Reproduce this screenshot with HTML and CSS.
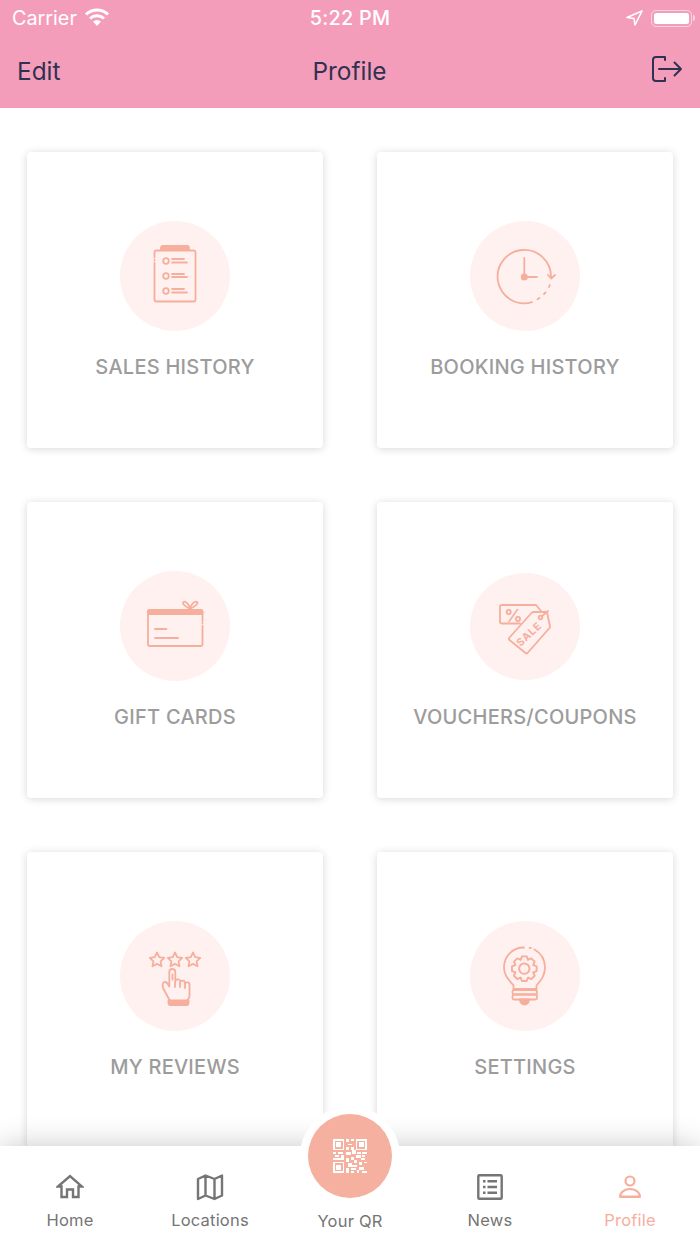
FILE: index.html
```html
<!DOCTYPE html>
<html lang="en">
<head>
<meta charset="utf-8">
<title>Profile</title>
<link rel="stylesheet" href="styles.css">
</head>
<body>
<div class="screen">
  <header class="topbar">
    <div class="status">
      <div class="status-left">
        <span>Carrier</span>
        <svg class="wifi" width="26" height="19" viewBox="0 0 26 19"><path d="M2 7.500a16 16 0 0 1 22 0M6 11.500a10.500 10.500 0 0 1 14 0" fill="none" stroke="#fff" stroke-width="3"/><path d="M9 14.500a6 6 0 0 1 8 0L13 19z" fill="#fff"/></svg>
      </div>
      <span class="time">5:22 PM</span>
      <div class="status-right">
        <svg width="17" height="16" viewBox="0 0 17 16"><path d="M16 1 1 7.500l7 1 1 6.500z" fill="none" stroke="#fff" stroke-width="1.600" stroke-linejoin="round"/></svg>
        <div class="battery"><div class="battery-fill"></div></div>
        <div class="battery-nub"></div>
      </div>
    </div>
    <div class="nav">
      <span class="nav-edit">Edit</span>
      <span class="nav-title">Profile</span>
      <svg class="nav-logout" width="32" height="28" viewBox="0 0 32 28"><path d="M14 5V2H5a3 3 0 0 0-3 3v18a3 3 0 0 0 3 3h9v-3M8 14h22M23.500 7.500 30 14l-6.500 6.500" fill="none" stroke="#2e3250" stroke-width="2" stroke-linecap="round" stroke-linejoin="round"/></svg>
    </div>
  </header>

  <main class="content">
    <div class="grid">
      <section class="card">
        <div class="circle">
          <svg width="110" height="110" viewBox="10 11 110 110"><g class="ink">
            <path d="M44.500 53v36.500a2 2 0 0 0 2 2h37a2 2 0 0 0 2-2v-47a2 2 0 0 0-2-2h-37a2 2 0 0 0-2 2v5M44.500 50v.5"/>
            <path class="solid" d="M51 40v-2a2 2 0 0 1 2-2h24a2 2 0 0 1 2 2v2z"/>
            <circle cx="56" cy="51" r="2.800"/><circle cx="56" cy="66" r="2.800"/><circle cx="56" cy="81" r="2.800"/>
            <path d="M62 49h12M62 52.500h15M62 64h12M62 67h15M62 79h12M62 82.500h15"/>
          </g></svg>
        </div>
        <h2 class="label">SALES HISTORY</h2>
      </section>
      <section class="card">
        <div class="circle">
          <svg width="110" height="110" viewBox="10 11 110 110"><g class="ink">
            <path d="M72 92.200A26.700 26.700 0 1 1 91 67.500"/>
            <path d="M88 65l3.200 3.500 3.800-3.500"/>
            <path d="M64.300 48v19H77"/>
            <circle class="solid" cx="64.300" cy="67" r="2.600"/>
            <path d="M89.800 75l-.8 2M85.500 82.500l-1.500 1.500M79.500 88l-2 1.200"/>
          </g></svg>
        </div>
        <h2 class="label">BOOKING HISTORY</h2>
      </section>
      <section class="card">
        <div class="circle">
          <svg width="110" height="110" viewBox="10 11 110 110"><g class="ink">
            <path d="M92.500 66v18a2 2 0 0 1-2 2H40a2 2 0 0 1-2-2V52a2 2 0 0 1 2-2h50.500a2 2 0 0 1 2 2v9M92.500 63v.5"/>
            <path class="solid" d="M38 54v-2a2 2 0 0 1 2-2h50.500a2 2 0 0 1 2 2v2z"/>
            <path d="M45 69h11.500M45 78h23"/>
            <path d="M80 49c-6-3-8-6-6.500-7 1.500-1.200 6 2 6.500 7zM80 49c.8-5 5-8.200 7-7 1.500 1-.8 4-7 7z"/>
          </g></svg>
        </div>
        <h2 class="label">GIFT CARDS</h2>
      </section>
      <section class="card">
        <div class="circle circle-short">
          <svg width="110" height="110" viewBox="10 11 110 110"><g class="ink">
            <path d="M60 63.500H42a2 2 0 0 1-2-2V47a2 2 0 0 1 2-2h34l5.500 6.500"/>
            <path d="M49.500 77.500 71.500 53a3 3 0 0 1 2-1H87l3 14.500a2 2 0 0 1-.5 1.500L67.500 93a1.500 1.500 0 0 1-2 0L49.500 80a1.500 1.500 0 0 1 0-2.500z"/>
            <circle cx="80.500" cy="57.500" r="1.800"/>
            <path d="M81.500 56.500 88 51"/>
            <text class="tag-pct" x="53.500" y="62">%</text>
            <text class="tag-sale" transform="translate(60.500 87) rotate(-43)">SALE</text>
          </g></svg>
        </div>
        <h2 class="label">VOUCHERS/COUPONS</h2>
      </section>
      <section class="card">
        <div class="circle">
          <svg width="110" height="110" viewBox="10 11 110 110"><g class="ink">
            <path id="star" d="M47 42.500l2.200 4.600 5 .7-3.600 3.500.9 5-4.500-2.400-4.500 2.400.9-5-3.600-3.500 5-.7z"/>
            <use href="#star" x="18"/><use href="#star" x="36"/>
            <path d="M59.500 90 53.500 79c-2-4-.5-7 1.500-7 2.500 0 3.500 3 4.300 4.500V62c0-4 6-4 6 0v9.500c0-2.500 5-3 5 0v1c0-2.500 4.500-2.500 4.700.3v1c.3-2 4.500-2.200 4.500.5V86c0 2-1 3-2 4"/>
            <path d="M62.500 64.500v5M65 72v5M70 73v4M75 74v4"/>
            <path class="solid" d="M58.500 90.500h20v3a1.500 1.500 0 0 1-1.500 1.500H60a1.500 1.500 0 0 1-1.500-1.500z"/>
          </g></svg>
        </div>
        <h2 class="label">MY REVIEWS</h2>
      </section>
      <section class="card">
        <div class="circle">
          <svg width="110" height="110" viewBox="10 11 110 110"><g class="ink">
            <path d="M64 37.500c-11 0-20 8.500-20 20 0 8 5 12.500 9.500 18V79h23v-3.500C81 70 85 65.500 85 57.500c0-8-4.500-14.500-10.500-18M69.500 37.800h1.500"/>
            <rect x="52.500" y="80" width="24.500" height="4.500" rx="1.500"/>
            <rect x="52.500" y="84.500" width="24.500" height="5" rx="1.500"/>
            <path class="solid" d="M60 89.500h9c0 2.800-2 5-4.500 5s-4.500-2.200-4.500-5z"/>
            <g transform="translate(64.300 58.700) scale(1.080)">
              <path id="tooth" d="M-3.400-8.400-2.200-11.400H2.200L3.400-8.400"/>
              <use href="#tooth" transform="rotate(45)"/><use href="#tooth" transform="rotate(90)"/><use href="#tooth" transform="rotate(135)"/><use href="#tooth" transform="rotate(180)"/><use href="#tooth" transform="rotate(225)"/><use href="#tooth" transform="rotate(270)"/><use href="#tooth" transform="rotate(315)"/>
              <circle r="4.800"/>
            </g>
          </g></svg>
        </div>
        <h2 class="label">SETTINGS</h2>
      </section>
    </div>
  </main>

  <nav class="tabbar">
    <div class="tab">
      <svg class="tab-icon" width="28" height="28" viewBox="0 0 28 28"><path d="M2 13.500 14 3l12 10.500h-3.500V24H17v-7.500h-6V24H5.500V13.500z" fill="none" stroke="currentColor" stroke-width="2.400" stroke-linejoin="miter"/></svg>
      <span class="tab-label">Home</span>
    </div>
    <div class="tab">
      <svg class="tab-icon" width="28" height="28" viewBox="0 0 28 28"><path d="M2 6 9.500 2.500 18.500 6 26 2.500V22.500L18.500 26 9.500 22.500 2 26zM9.500 2.500v20M18.500 6v20" fill="none" stroke="currentColor" stroke-width="2.400" stroke-linejoin="round"/></svg>
      <span class="tab-label">Locations</span>
    </div>
    <div class="tab tab-center">
      <div class="qr-ring">
        <div class="qr-button">
          <svg width="34" height="34" viewBox="0 0 21 21" shape-rendering="crispEdges"><path fill="#fff" fill-rule="evenodd" d="M0 0h7v7H0zM1 1v5h5V1zM2 2h3v3H2zM14 0h7v7h-7zM15 1v5h5V1zM16 2h3v3h-3zM0 14h7v7H0zM1 15v5h5v-5zM2 16h3v3H2zM8 0h2v2H8zM11 0h2v1h-2zM9 3h3v1H9zM8 5h2v2H8zM11 5h2v2h-2zM8 8h3v2H8zM12 7h2v2h-2zM0 8h2v1H0zM3 8h3v1H3zM1 10h3v1H1zM0 12h5v1H0zM5 10h2v3H5zM15 8h2v1h-2zM18 8h3v1h-3zM14 10h3v2h-3zM18 10h2v1h-2zM11 11h2v2h-2zM8 12h2v2H8zM17 12h3v1h-3zM9 15h3v2H9zM13 13h2v2h-2zM16 14h2v2h-2zM19 14h2v1h-2zM8 18h2v3H8zM11 18h3v1h-3zM12 16h3v1h-3zM16 17h3v2h-3zM11 20h2v1h-2zM15 19h1v2h-1zM18 20h3v1h-3z"/></svg>
        </div>
      </div>
      <span class="tab-label">Your QR</span>
    </div>
    <div class="tab">
      <svg class="tab-icon" width="28" height="28" viewBox="0 0 28 28"><rect x="2.300" y="2.300" width="23.400" height="23.400" rx="1" fill="none" stroke="currentColor" stroke-width="2.400"/><path d="M7 7h2.500v2.500H7zM11.500 7H21v2.500h-9.500zM7 12.800h2.500v2.500H7zM11.500 12.800H21v2.500h-9.500zM7 18.500h2.500V21H7zM11.500 18.500H21V21h-9.500z" fill="currentColor"/></svg>
      <span class="tab-label">News</span>
    </div>
    <div class="tab tab-active">
      <svg class="tab-icon" width="28" height="28" viewBox="0 0 28 28"><circle cx="14" cy="8" r="4.500" fill="none" stroke="currentColor" stroke-width="2.200"/><path d="M4 24c0-5 5-8 10-8s10 3 10 8z" fill="none" stroke="currentColor" stroke-width="2" stroke-linejoin="round"/><path d="M4 22.500h20V24H4z" fill="currentColor"/></svg>
      <span class="tab-label">Profile</span>
    </div>
  </nav>
</div>
</body>
</html>
```

FILE: styles.css
```css
* { box-sizing: border-box; }

body {
  margin: 0;
  background: #fff;
  font-family: Inter, "Liberation Sans", sans-serif;
}

.screen {
  display: flex;
  flex-direction: column;
  width: 700px;
  height: 1244px;
  overflow: hidden;
}

.topbar {
  flex: 0 0 108px;
  background: #f49dbb;
}

.status {
  display: grid;
  grid-template-columns: 1fr auto 1fr;
  align-items: center;
  height: 36px;
  padding: 0 5px;
  color: #fff;
  font-size: 19.800px;
}

.status-left {
  display: flex;
  align-items: center;
  gap: 7px;
  padding-left: 7px;
}

.wifi { margin-bottom: 3px; }
.time { font-weight: 500; letter-spacing: .3px; }

.status-right {
  display: flex;
  align-items: center;
  justify-content: flex-end;
}

.status-right svg { margin-right: 8px; }

.battery {
  width: 41px;
  height: 17px;
  padding: 2px;
  border: 1.500px solid rgba(255, 255, 255, .55);
  border-radius: 5px;
}

.battery-fill {
  height: 100%;
  background: #fff;
  border-radius: 2.500px;
}

.battery-nub {
  width: 2px;
  height: 6px;
  margin-left: 1px;
  background: rgba(255, 255, 255, .55);
  border-radius: 0 2px 2px 0;
}

.nav {
  display: grid;
  grid-template-columns: 1fr auto 1fr;
  align-items: center;
  height: 70px;
  padding: 0 18px 0 17px;
  color: #2e3250;
  font-size: 24.400px;
}

.nav-logout {
  justify-self: end;
  margin-right: -1px;
  margin-bottom: 5px;
}

.content {
  flex: 1;
  min-height: 0;
  overflow: hidden;
  padding: 44px 27px 0;
}

.grid {
  display: grid;
  grid-template-columns: 296px 296px;
  grid-auto-rows: 296px;
  gap: 54px;
}

.card {
  display: flex;
  flex-direction: column;
  align-items: center;
  padding-top: 69px;
  background: #fff;
  border-radius: 4px;
  box-shadow: 0 1px 8px rgba(0, 0, 0, .16);
}

.circle {
  width: 110px;
  height: 110px;
  border-radius: 50%;
  background: #fff1ef;
}

.circle-short {
  height: 107px;
  margin: 1.500px 0;
}

.circle svg { display: block; }
.circle-short svg { margin-top: -1.500px; }

.ink {
  fill: none;
  stroke: #f6ae9d;
  stroke-width: 1.800;
  stroke-linecap: round;
  stroke-linejoin: round;
}

.ink .solid { fill: #f6ae9d; }

.tag-pct {
  fill: #f6ae9d;
  stroke: none;
  font-size: 18px;
  font-weight: 700;
  text-anchor: middle;
}

.tag-sale {
  fill: #f6ae9d;
  stroke: none;
  font-size: 10.500px;
  font-weight: 700;
  letter-spacing: .8px;
}

.label {
  margin: 23px 0 0;
  color: #9c9c9c;
  font-size: 20px;
  font-weight: 500;
  line-height: 27px;
  letter-spacing: .25px;
}

.tabbar {
  position: relative;
  display: grid;
  flex: 0 0 98px;
  grid-template-columns: repeat(5, 140px);
  background: #fff;
  box-shadow: 0 0 28px rgba(0, 0, 0, .22);
}

.tab {
  display: flex;
  flex-direction: column;
  align-items: center;
  padding-top: 27px;
  color: #757575;
}

.tab-active { color: #f6ae9d; }

.tab-icon { display: block; }

.tab-label {
  margin-top: 7px;
  font-size: 16.500px;
  line-height: 24px;
  letter-spacing: .2px;
}

.tab-center { padding-top: 56px; }

.qr-ring {
  position: absolute;
  top: -40px;
  left: 300px;
  display: flex;
  align-items: center;
  justify-content: center;
  width: 100px;
  height: 100px;
  background: #fff;
  border-radius: 50%;
}

.qr-button {
  display: flex;
  align-items: center;
  justify-content: center;
  width: 84px;
  height: 84px;
  background: #f6b09f;
  border-radius: 50%;
}
```
